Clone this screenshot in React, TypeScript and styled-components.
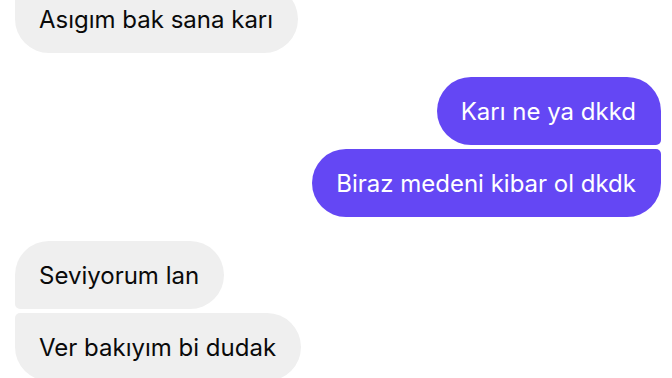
import React from 'react';
import styled, { createGlobalStyle } from 'styled-components';

const GlobalStyle = createGlobalStyle`
  html, body {
    margin: 0;
    padding: 0;
    background: #ffffff;
  }
  body {
    width: 672px;
    height: 378px;
    overflow: hidden;
    font-family: Inter, 'Noto Sans', sans-serif;
  }
`;

const Thread = styled.div`
  display: flex;
  flex-direction: column;
  gap: 24px;
  margin-top: -15px;
  padding: 0 11px 0 15px;
`;

const Group = styled.div<{ mine?: boolean }>`
  display: flex;
  flex-direction: column;
  align-items: ${(p) => (p.mine ? 'flex-end' : 'flex-start')};
  gap: 4px;
`;

type Pos = 'single' | 'first' | 'middle' | 'last';

const BIG = '34px';
const SMALL = '5px';

function radius(mine: boolean, pos: Pos): string {
  const topSide = pos === 'middle' || pos === 'last' ? SMALL : BIG;
  const bottomSide = pos === 'middle' || pos === 'first' ? SMALL : BIG;
  return mine
    ? `${BIG} ${topSide} ${bottomSide} ${BIG}`
    : `${topSide} ${BIG} ${BIG} ${bottomSide}`;
}

const Bubble = styled.div<{ mine?: boolean; pos: Pos }>`
  box-sizing: border-box;
  height: 68px;
  display: flex;
  align-items: center;
  padding: 2px 25px 0 24px;
  border-radius: ${(p) => radius(!!p.mine, p.pos)};
  background: ${(p) => (p.mine ? '#6447f4' : '#efefef')};
  color: ${(p) => (p.mine ? '#ffffff' : '#0a0a0a')};
  font-size: 24px;
  line-height: 28px;
  white-space: nowrap;
`;

export default function App(): React.ReactElement {
  return (
    <>
      <GlobalStyle />
      <Thread>
        <Group>
          <Bubble pos="last">Asıgım bak sana karı</Bubble>
        </Group>
        <Group mine>
          <Bubble mine pos="first">Karı ne ya dkkd</Bubble>
          <Bubble mine pos="last">Biraz medeni kibar ol dkdk</Bubble>
        </Group>
        <Group>
          <Bubble pos="first">Seviyorum lan</Bubble>
          <Bubble pos="last">Ver bakıyım bi dudak</Bubble>
        </Group>
      </Thread>
    </>
  );
}
